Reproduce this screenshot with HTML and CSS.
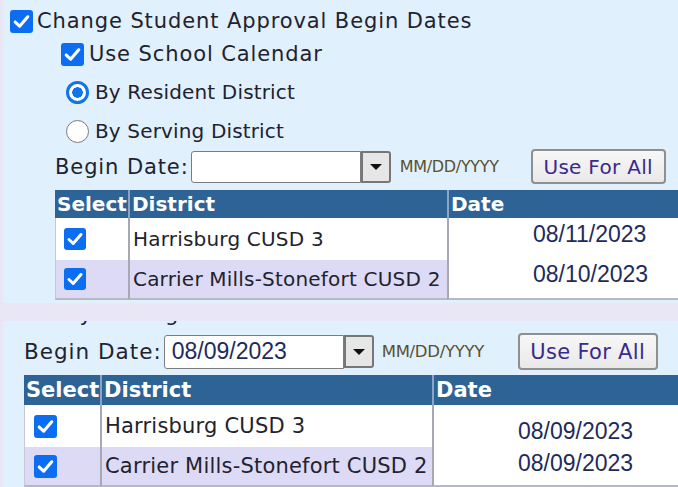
FILE: index.html
```html
<!DOCTYPE html>
<html>
<head>
<meta charset="utf-8">
<link rel="stylesheet" href="styles.css">
</head>
<body>
<div class="panel panel-top">
  <div class="line line-1">
    <span class="cb"><svg viewBox="0 0 22 22"><path d="M5 11.5 L9.2 15.5 L17 6.5" /></svg></span>
    <span class="lbl">Change Student Approval Begin Dates</span>
  </div>
  <div class="line line-2">
    <span class="cb"><svg viewBox="0 0 22 22"><path d="M5 11.5 L9.2 15.5 L17 6.5" /></svg></span>
    <span class="lbl">Use School Calendar</span>
  </div>
  <div class="line line-3">
    <span class="radio on"></span>
    <span class="lbl">By Resident District</span>
  </div>
  <div class="line line-4">
    <span class="radio"></span>
    <span class="lbl">By Serving District</span>
  </div>
  <div class="begin">
    <span class="lbl">Begin Date:</span>
    <span class="input"></span>
    <span class="dd"><span class="tri"></span></span>
    <span class="fmt">MM/DD/YYYY</span>
    <span class="btn">Use For All</span>
  </div>
  <div class="grid">
    <div class="th c-sel">Select</div>
    <div class="th c-dist">District</div>
    <div class="th c-date">Date</div>
    <div class="td c-sel r1"><span class="cb"><svg viewBox="0 0 22 22"><path d="M5 11.5 L9.2 15.5 L17 6.5" /></svg></span></div>
    <div class="td c-dist r1">Harrisburg CUSD 3</div>
    <div class="td c-date r1">08/11/2023</div>
    <div class="td c-sel r2"><span class="cb"><svg viewBox="0 0 22 22"><path d="M5 11.5 L9.2 15.5 L17 6.5" /></svg></span></div>
    <div class="td c-dist r2">Carrier Mills-Stonefort CUSD 2</div>
    <div class="td c-date r2">08/10/2023</div>
  </div>
</div>

<div class="panel panel-bottom">
  <div class="clip"><div class="clip-inner">By Serving District</div></div>
  <div class="begin">
    <span class="lbl">Begin Date:</span>
    <span class="input"><span class="val">08/09/2023</span></span>
    <span class="dd"><span class="tri"></span></span>
    <span class="fmt">MM/DD/YYYY</span>
    <span class="btn">Use For All</span>
  </div>
  <div class="grid">
    <div class="th c-sel">Select</div>
    <div class="th c-dist">District</div>
    <div class="th c-date">Date</div>
    <div class="td c-sel r1"><span class="cb"><svg viewBox="0 0 22 22"><path d="M5 11.5 L9.2 15.5 L17 6.5" /></svg></span></div>
    <div class="td c-dist r1">Harrisburg CUSD 3</div>
    <div class="td c-date r1">08/09/2023</div>
    <div class="td c-sel r2"><span class="cb"><svg viewBox="0 0 22 22"><path d="M5 11.5 L9.2 15.5 L17 6.5" /></svg></span></div>
    <div class="td c-dist r2">Carrier Mills-Stonefort CUSD 2</div>
    <div class="td c-date r2">08/09/2023</div>
  </div>
</div>
</body>
</html>
```

FILE: styles.css
```css
* { box-sizing: border-box; }
html, body { margin: 0; padding: 0; }
body {
  width: 678px;
  height: 487px;
  overflow: hidden;
  background: #e9e7f5;
  font-family: "DejaVu Sans", Verdana, sans-serif;
  color: #22222e;
}
.panel {
  margin-left: 3px;
  background: #e1f0fd;
  overflow: hidden;
}
.panel-top { height: 303px; padding-top: 8px; }
.panel-bottom { margin-top: 18px; height: 166px; }

.line { display: flex; align-items: center; height: 26px; }
.lbl { font-size: 21px; letter-spacing: 0.9px; white-space: nowrap; }
.line-1 { padding-left: 7px; }
.line-1 .lbl { margin-left: 4px; }
.line-2 { margin-top: 7px; padding-left: 58px; }
.line-2 .lbl { margin-left: 5px; }
.line-3 { margin-top: 12px; padding-left: 63px; }
.line-4 { margin-top: 13px; padding-left: 63px; }
.line-3 .lbl, .line-4 .lbl { margin-left: 6px; font-size: 20px; letter-spacing: 0.15px; }

.cb {
  width: 23px; height: 23px;
  border-radius: 3px;
  background: #0b6df2;
  display: inline-flex;
  flex: none;
}
.cb svg { width: 100%; height: 100%; }
.cb path { fill: none; stroke: #fff; stroke-width: 3; stroke-linecap: round; stroke-linejoin: round; }

.radio {
  width: 23px; height: 23px;
  border-radius: 50%;
  background: #fff;
  border: 1.5px solid #7a7a7a;
  flex: none;
}
.radio.on {
  border: 3px solid #1273ea;
  background: radial-gradient(circle, #1273ea 0 5px, #fff 5.5px);
}

.begin { display: flex; align-items: center; }
.panel-top .begin { margin-top: 6px; padding-left: 52px; height: 33px; }
.input {
  background: #fff;
  border: 1.5px solid #7c7c7c;
  border-radius: 3px 0 0 3px;
  display: flex; align-items: center;
  flex: none;
}
.panel-top .input { width: 170px; height: 32px; margin-left: 2px; }
.dd {
  background: #e6e6e6;
  border: 2px solid #777;
  border-radius: 0 3px 3px 0;
  display: flex; align-items: center; justify-content: center;
  flex: none;
}
.panel-top .dd { width: 30px; height: 32px; }
.tri { width: 0; height: 0; border-left: 6px solid transparent; border-right: 6px solid transparent; border-top: 6px solid #111; }
.fmt { color: #5a5030; letter-spacing: -0.3px; white-space: nowrap; flex: none; }
.panel-top .fmt { font-size: 16px; margin-left: 9px; width: 131px; }
.btn {
  background: linear-gradient(#f7f7f7, #e9e9e9);
  border: 2px solid #8f8f8f;
  border-radius: 4px;
  color: #3a2a8c;
  display: flex; align-items: center; justify-content: center;
  white-space: nowrap;
  letter-spacing: 0.3px;
  flex: none;
}
.panel-top .btn { width: 135px; height: 35px; font-size: 20px; }

.grid { display: grid; }
.panel-top .grid { margin-top: 7px; margin-left: 52px; grid-template-columns: 73px 319px 231px; grid-template-rows: 28px 42px 40px; }
.th {
  background: #2e6395;
  color: #fff;
  font-weight: bold;
  display: flex; align-items: center;
  padding-left: 2px;
  border-left: 2px solid #8aa6c4;
  white-space: nowrap;
}
.th.c-sel { border-left: none; }
.panel-top .th { font-size: 20px; }
.td { display: flex; align-items: center; white-space: nowrap; border-left: 2px solid #a8a8b4; }
.td.c-sel { border-left: 1px solid #c8c8d4; padding-left: 8px; }
.td.r1 { background: #fff; }
.td.r2 { background: #dddaf6; border-bottom: 2px solid #b8b8c4; }
.td.c-dist { font-size: 20px; letter-spacing: 0.2px; padding-left: 3px; }
.td.c-date { background: #fff; font-family: "Liberation Sans", Arial, sans-serif; color: #1d2b5c; align-items: flex-start; font-size: 23px; padding-left: 84px; }
.panel-top .td.c-date.r1 { padding-top: 3px; }
.panel-top .td.c-date.r2 { padding-top: 1px; }
.panel-top .td .cb { width: 22px; height: 22px; }

/* bottom panel, slightly larger scale */
.clip { height: 10px; overflow: hidden; padding-left: 62px; }
.clip-inner { font-size: 21px; line-height: 26px; margin-top: -20px; white-space: nowrap; }
.panel-bottom .begin { margin-top: 3px; padding-left: 21px; height: 35px; }
.panel-bottom .lbl { font-size: 21.5px; letter-spacing: 1px; }
.panel-bottom .input { width: 180px; height: 34px; margin-left: 2px; }
.val { font-family: "Liberation Sans", Arial, sans-serif; color: #1d2b5c; font-size: 23px; padding-left: 7px; }
.panel-bottom .dd { width: 30px; height: 33px; }
.panel-bottom .fmt { font-size: 16.5px; margin-left: 8px; width: 136px; }
.panel-bottom .btn { width: 140px; height: 37px; font-size: 21px; }
.panel-bottom .grid { margin-top: 6px; margin-left: 21px; grid-template-columns: 76px 332px 246px; grid-template-rows: 30px 42px 40px; }
.panel-bottom .th { font-size: 21px; }
.panel-bottom .td.c-sel { padding-left: 9px; }
.panel-bottom .td.c-dist { font-size: 21px; letter-spacing: 0.2px; }
.panel-bottom .td.c-date.r1 { padding-top: 13px; }
.panel-bottom .td.c-date.r2 { padding-top: 3px; }
.panel-bottom .td .cb { width: 23px; height: 23px; }
```
